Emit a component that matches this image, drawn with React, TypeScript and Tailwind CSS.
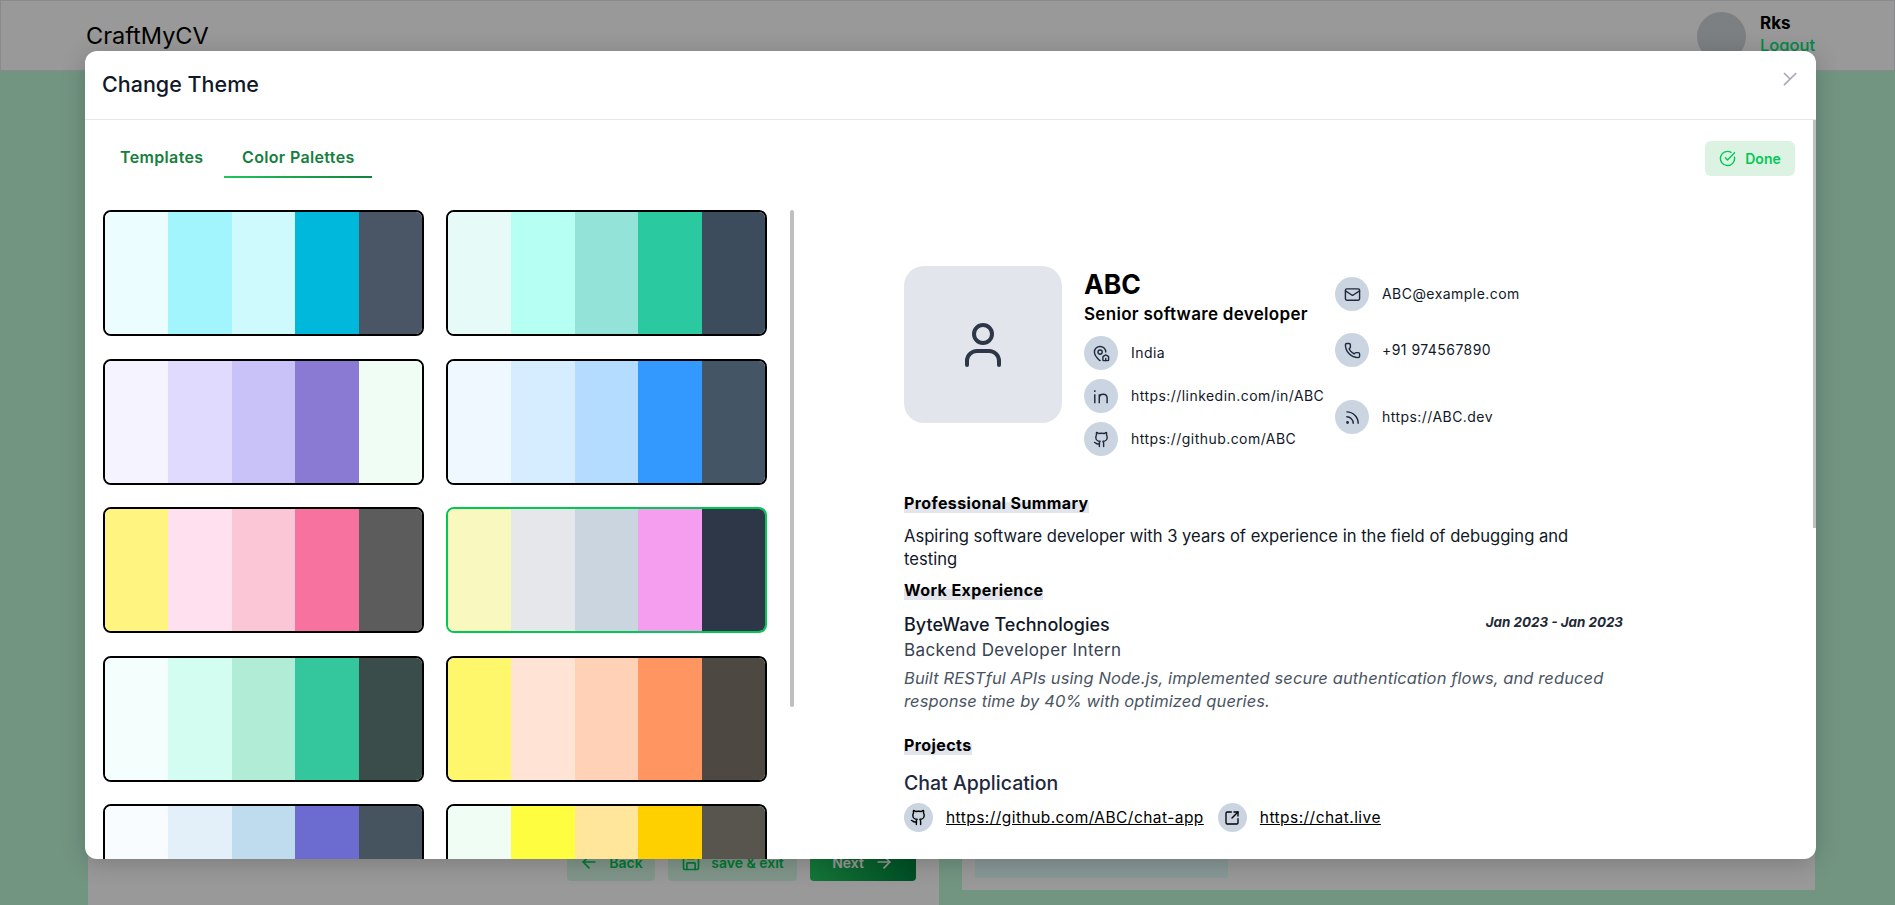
import {
  ArrowLeft,
  ArrowRight,
  CircleCheckBig,
  Github,
  Mail,
  MapPinHouse,
  Phone,
  Rss,
  Save,
  SquareArrowOutUpRight,
} from 'lucide-react'
import type { ReactNode } from 'react'

const PALETTES = [
  ['#ebfdff', '#a2f4fd', '#cefafe', '#00b8db', '#4a5565'],
  ['#e6faf7', '#b5fff3', '#93e3d8', '#2ac9a0', '#3d4c5c'],
  ['#f5f3ff', '#e0daff', '#c9c2f8', '#8b7ad4', '#f0fdf4'],
  ['#f0f8ff', '#d6ecff', '#b3dcff', '#3399ff', '#445566'],
  ['#fff47f', '#ffe0ee', '#fbc6d5', '#f7729e', '#5c5c5c'],
  ['#f9f8bf', '#e5e7eb', '#cbd5e0', '#f59ef0', '#2d3748'],
  ['#f4fffd', '#d3fdf1', '#b1ecd6', '#34c79e', '#3a4d4a'],
  ['#fff76b', '#ffe4d6', '#ffd2b8', '#ff9662', '#4e4842'],
  ['#f8fcff', '#e3f0fa', '#bfdcef', '#6c6bcf', '#46545f'],
  ['#f0fdf4', '#fffd40', '#ffe69b', '#ffd000', '#58544e'],
]

const SELECTED = 5

function LinkedinGlyph() {
  return (
    <svg width="19" height="19" viewBox="0 0 17 17" fill="none" stroke="currentColor" strokeWidth="1.3">
      <path d="M2.5 6.5v8" />
      <path d="M2.5 3v1.4" />
      <path d="M6.5 14.5v-8M6.5 9.8c0-2 1.6-3.3 3.5-3.3s3.5 1.2 3.5 3.4v4.6" />
    </svg>
  )
}

function PhotoPlaceholder() {
  return (
    <svg width="48" height="44" viewBox="0 0 48 44" fill="none" stroke="currentColor" strokeWidth="4" strokeLinecap="round">
      <circle cx="24" cy="11" r="9" />
      <path d="M8 42v-4a10 10 0 0 1 10-10h12a10 10 0 0 1 10 10v4" />
    </svg>
  )
}

function CloseGlyph() {
  return (
    <svg width="14" height="14" viewBox="0 0 14 14" fill="none" stroke="currentColor" strokeWidth="1.7">
      <path d="M13.2 1 1 13.2M1 1l6.5 6.5" />
    </svg>
  )
}

function IconCircle({ children }: { children: ReactNode }) {
  return (
    <span className="flex h-[34px] w-[34px] shrink-0 items-center justify-center rounded-full bg-[#cbd5e1] text-[#1e293b]">
      {children}
    </span>
  )
}

function ContactRow({ icon, text, className }: { icon: ReactNode; text: string; className?: string }) {
  return (
    <div className={`flex items-center gap-[13px] text-[14px] tracking-[0.45px] text-[#111827] ${className ?? ''}`}>
      <IconCircle>{icon}</IconCircle>
      <span className="-mt-[2px]">{text}</span>
    </div>
  )
}

function SectionTitle({ children }: { children: ReactNode }) {
  return (
    <h3 className="inline-block bg-[linear-gradient(transparent_45%,#e2e6ec_45%)] text-[16px] leading-[20px] font-bold tracking-[0.4px] text-black">
      {children}
    </h3>
  )
}

function Palette({ colors, selected }: { colors: string[]; selected: boolean }) {
  return (
    <div
      className={`flex h-[126px] overflow-hidden rounded-[8px] border-2 ${selected ? 'border-[#00c853]' : 'border-black'}`}
    >
      {colors.map((c, i) => (
        <div key={i} className="flex-1" style={{ backgroundColor: c }} />
      ))}
    </div>
  )
}

function BackgroundPage() {
  return (
    <>
      <header className="flex h-[71px] items-start justify-between border border-[#e5e7eb] bg-white pr-[79px] pl-[85px]">
        <span className="mt-[18px] text-[23.5px] leading-[34px] text-black">CraftMyCV</span>
        <div className="mt-[11px] flex gap-[14px]">
          <span className="h-[49px] w-[49px] rounded-full bg-[#d1d5db]" />
          <div className="flex flex-col">
            <span className="text-[17px] leading-[22px] font-bold text-black">Rks</span>
            <span className="text-[16.5px] leading-[22px] font-medium text-[#00e676]">Logout</span>
          </div>
        </div>
      </header>
      <main className="flex gap-[23px] pr-[80px] pl-[88px]">
        <section className="flex h-[834px] w-[851px] justify-end bg-white pt-[772px] pr-[23px]">
          <div className="flex h-[38px] gap-[13px] text-[14px] font-semibold text-[#00c853]">
            <button className="flex w-[88px] items-center justify-center gap-[10px] rounded-[4px] bg-[#bef8d9]/60">
              <ArrowLeft size={20} /> Back
            </button>
            <button className="flex w-[129px] items-center justify-center gap-[10px] rounded-[4px] bg-[#bef8d9]/60">
              <Save size={20} /> save &amp; exit
            </button>
            <button className="flex w-[106px] items-center justify-center gap-[10px] rounded-[4px] bg-gradient-to-r from-[#22c55e] to-[#00843d] text-white">
              Next <ArrowRight size={20} />
            </button>
          </div>
        </section>
        <section className="flex h-[819px] w-[853px] items-end bg-white pb-[12px] pl-[13px]">
          <div className="h-[40px] w-[253px] bg-[#e1fdfa]" />
        </section>
      </main>
    </>
  )
}

function Resume() {
  return (
    <div className="w-[719px] pt-[56px] text-[#111827]">
      <div className="flex">
        <div className="flex h-[157px] w-[158px] shrink-0 items-center justify-center rounded-[20px] bg-[#e2e6ec] text-[#2d3748]">
          <PhotoPlaceholder />
        </div>
        <div className="ml-[22px] w-[251px]">
          <h1 className="text-[26.5px] leading-[36px] font-bold text-black">ABC</h1>
          <p className="text-[17px] leading-[24px] font-semibold tracking-[0.3px] whitespace-nowrap text-black">
            Senior software developer
          </p>
          <div className="mt-[10px] flex flex-col gap-[9px] whitespace-nowrap">
            <ContactRow icon={<MapPinHouse size={17} />} text="India" />
            <ContactRow icon={<LinkedinGlyph />} text="https://linkedin.com/in/ABC" />
            <ContactRow icon={<Github size={17} />} text="https://github.com/ABC" />
          </div>
        </div>
        <div className="flex flex-col pt-[11px]">
          <ContactRow icon={<Mail size={17} />} text="ABC@example.com" />
          <ContactRow className="mt-[22px]" icon={<Phone size={17} />} text="+91 974567890" />
          <ContactRow className="mt-[33px]" icon={<Rss size={17} />} text="https://ABC.dev" />
        </div>
      </div>

      <div className="mt-[35px]">
        <SectionTitle>Professional Summary</SectionTitle>
      </div>
      <p className="mt-[10px] w-[700px] text-[16.6px] leading-[23px] text-[#111827]">
        Aspiring software developer with 3 years of experience in the field of debugging and testing
      </p>

      <div className="mt-[7px]">
        <SectionTitle>Work Experience</SectionTitle>
      </div>
      <div className="mt-[11px] flex items-start justify-between">
        <span className="text-[18px] leading-[24px] font-medium text-[#111827]">ByteWave Technologies</span>
        <span className="text-[13.4px] leading-[18px] font-bold text-[#1f2937] italic">Jan 2023 - Jan 2023</span>
      </div>
      <p className="mt-[1px] text-[17px] leading-[24px] tracking-[0.4px] text-[#374151]">Backend Developer Intern</p>
      <p className="mt-[5px] text-[16.5px] leading-[23px] tracking-[0.1px] text-[#4b5563] italic">
        Built RESTful APIs using Node.js, implemented secure authentication flows, and reduced response time by 40% with
        optimized queries.
      </p>

      <div className="mt-[20px]">
        <SectionTitle>Projects</SectionTitle>
      </div>
      <h4 className="mt-[12px] text-[19.5px] leading-[28px] font-medium text-[#1e293b]">Chat Application</h4>
      <div className="mt-[6px] flex items-center text-[15.5px] tracking-[0.45px] text-black">
        <span className="flex h-[29px] w-[29px] items-center justify-center rounded-full bg-[#cbd5e1]">
          <Github size={17} />
        </span>
        <a className="ml-[13px] underline">https://github.com/ABC/chat-app</a>
        <span className="ml-[14px] flex h-[29px] w-[29px] items-center justify-center rounded-full bg-[#cbd5e1]">
          <SquareArrowOutUpRight size={16} />
        </span>
        <a className="ml-[13px] underline">https://chat.live</a>
      </div>
    </div>
  )
}

export default function App() {
  return (
    <div className="relative h-[905px] overflow-hidden bg-[#bef8d9] font-['Inter','Liberation_Sans',sans-serif]">
      <BackgroundPage />
      <div className="absolute inset-0 bg-black/40" />

      <div className="absolute top-[51px] left-[85px] flex h-[808px] w-[1731px] flex-col overflow-hidden rounded-[12px] bg-white shadow-[0_4px_24px_rgba(0,0,0,0.2)]">
        <div className="flex h-[69px] shrink-0 items-start justify-between border-b border-[#e5e7eb] pr-[19px] pl-[17px]">
          <h2 className="mt-[19px] text-[21.5px] leading-[28px] font-medium text-[#111827]">Change Theme</h2>
          <span className="mt-[21px] text-[#a5abb8]">
            <CloseGlyph />
          </span>
        </div>

        <div className="relative flex min-h-0 flex-1 flex-col">
          <div className="flex h-[90px] shrink-0 items-start justify-between pr-[21px] pl-[17px]">
            <div className="mt-[25px] flex text-[16px] leading-[25px] font-semibold tracking-[0.35px] whitespace-nowrap text-[#15803d]">
              <button className="flex h-[33px] w-[122px] items-start px-[18px]">Templates</button>
              <div className="h-[33px] w-[148px] border-b-2 border-transparent pl-[18px] [border-image:linear-gradient(to_right,#22c55e,#15803d)_1]">
                <button>Color Palettes</button>
              </div>
            </div>
            <button className="mt-[21px] flex h-[35px] w-[90px] items-center justify-center gap-[9px] rounded-[6px] bg-[#dcf3e3] text-[14px] font-semibold text-[#00c853]">
              <CircleCheckBig size={17} />
              Done
            </button>
          </div>

          <div className="flex min-h-0 flex-1">
            <div className="grid h-[700px] w-[699px] shrink-0 grid-cols-[321px_321px] content-start gap-x-[22px] gap-y-[22.5px] pl-[18px]">
              {PALETTES.map((colors, i) => (
                <Palette key={i} colors={colors} selected={i === SELECTED} />
              ))}
            </div>
            <div className="pl-[120px]">
              <Resume />
            </div>
          </div>

          {/* thin scroll thumbs, they sit on top of the panes */}
          <div className="absolute top-[90px] left-[705px] h-[497px] w-[4px] rounded-full bg-[#bfbfbf]" />
          <div className="absolute top-0 right-0 h-[408px] w-[3px] bg-[#bfbfbf]" />
        </div>
      </div>
    </div>
  )
}
